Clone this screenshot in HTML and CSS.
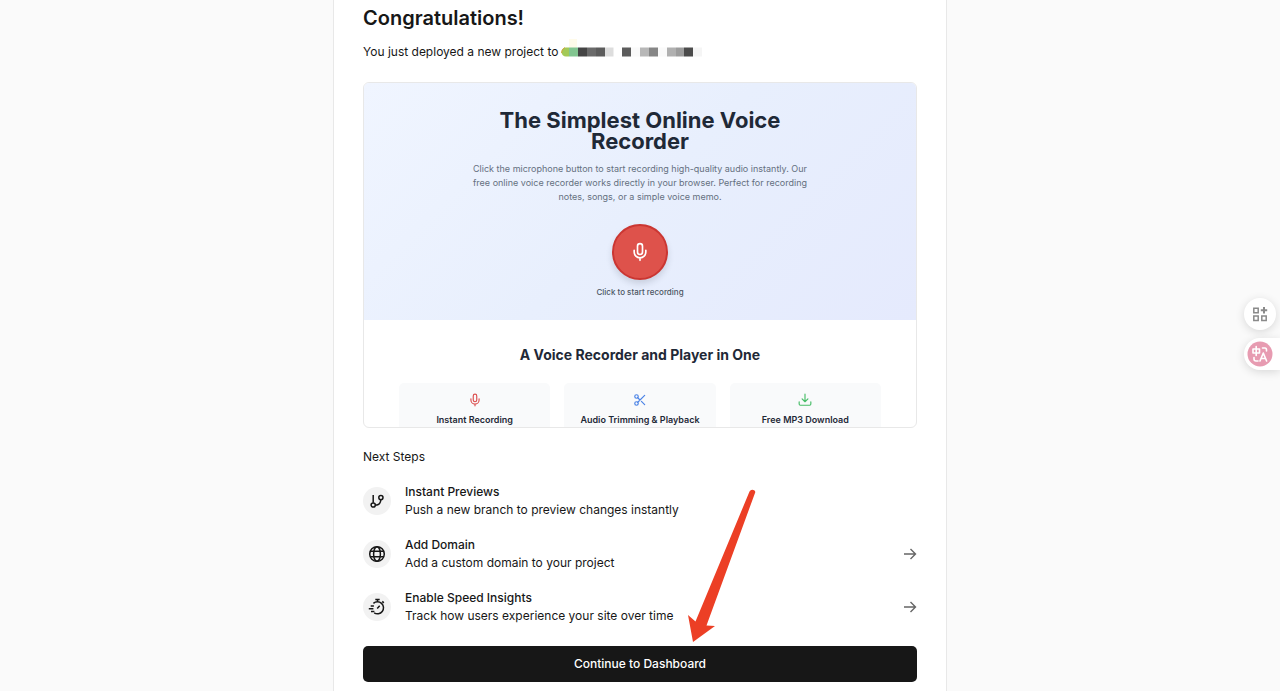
FILE: index.html
```html
<!DOCTYPE html>
<html lang="en">
<head>
<meta charset="utf-8">
<meta name="viewport" content="width=device-width, initial-scale=1">
<title>Congratulations!</title>
<link rel="stylesheet" href="styles.css">
</head>
<body>
<main class="panel">
  <h1 class="title">Congratulations!</h1>
  <p class="lead">You just deployed a new project to
    <svg class="redacted" width="141" height="18" viewBox="0 0 141 18" aria-hidden="true">
      <path fill="#fffbea" d="M8 0h8v9H8z"/>
      <path fill="#a3c957" d="M8 8.500H5a4.500 4.500 0 0 0 0 9h3z"/>
      <path fill="none" stroke="#d1a43c" d="M4 8.500Q.5 10 .5 14"/>
      <path fill="#82c590" d="M8 8.500h9v9H8z"/>
      <path fill="#444" d="M17 8.500h9v9h-9z"/>
      <path fill="#6a6a6a" d="M26 8.500h9v9h-9z"/>
      <path fill="#5c5c5c" d="M35 8.500h9v9h-9zM61 8.500h9v9h-9z"/>
      <path fill="#ddd" d="M44 8.500h8.500v9H44z"/>
      <path fill="#fafafa" d="M70 8.500h9v9h-9zM97 8.500h9v9h-9z"/>
      <path fill="#b7b7b7" d="M79 8.500h9v9h-9z"/>
      <path fill="#868686" d="M88 8.500h9v9h-9z"/>
      <path fill="#b0b0b0" d="M106 8.500h9v9h-9z"/>
      <path fill="#9c9c9c" d="M115 8.500h8v9h-8z"/>
      <path fill="#4b4b4b" d="M123 8.500h9v9h-9z"/>
      <path fill="#f5f5f5" d="M132 8.500h9v9h-9z"/>
    </svg>
  </p>

  <section class="preview">
    <div class="hero">
      <h2 class="hero-title">The Simplest Online Voice Recorder</h2>
      <p class="hero-text">Click the microphone button to start recording high-quality audio instantly. Our free online voice recorder works directly in your browser. Perfect for recording notes, songs, or a simple voice memo.</p>
      <button class="record" type="button" aria-label="Start recording">
        <svg width="20" height="20" viewBox="0 0 24 24" fill="none" stroke="#fff" stroke-width="2" stroke-linecap="round" stroke-linejoin="round"><rect x="9" y="2" width="6" height="13" rx="3"/><path d="M19 10v2a7 7 0 0 1-14 0v-2M12 19v3"/></svg>
      </button>
      <p class="record-hint">Click to start recording</p>
    </div>
    <div class="features">
      <h3 class="features-title">A Voice Recorder and Player in One</h3>
      <div class="feature-grid">
        <div class="feature">
          <svg width="14" height="14" viewBox="0 0 24 24" fill="none" stroke="#dc4f4f" stroke-width="2" stroke-linecap="round" stroke-linejoin="round"><rect x="9" y="2" width="6" height="13" rx="3"/><path d="M19 10v2a7 7 0 0 1-14 0v-2M12 19v3"/></svg>
          <h4 class="feature-name">Instant Recording</h4>
        </div>
        <div class="feature">
          <svg width="14" height="14" viewBox="0 0 24 24" fill="none" stroke="#4b83e6" stroke-width="2" stroke-linecap="round" stroke-linejoin="round"><circle cx="6" cy="6" r="3"/><circle cx="6" cy="18" r="3"/><path d="M20 4 8.120 15.880M14.470 14.480 20 20M8.120 8.120 12 12"/></svg>
          <h4 class="feature-name">Audio Trimming &amp; Playback</h4>
        </div>
        <div class="feature">
          <svg width="14" height="14" viewBox="0 0 24 24" fill="none" stroke="#48bd68" stroke-width="2" stroke-linecap="round" stroke-linejoin="round"><path d="M22 15v4a2 2 0 0 1-2 2H4a2 2 0 0 1-2-2v-4M7 10l5 5 5-5M12 15V2"/></svg>
          <h4 class="feature-name">Free MP3 Download</h4>
        </div>
      </div>
    </div>
  </section>

  <h2 class="steps-title">Next Steps</h2>
  <ul class="steps">
    <li class="step">
      <span class="step-icon"><svg width="16" height="16" viewBox="0 0 16 16" fill="none" stroke="#171717" stroke-width="1.500"><path d="M4.200 2v7.700M6.500 12.300c3.500-.3 5.200-2.300 5.300-5.500"/><circle cx="4.200" cy="12" r="2.100"/><circle cx="11.900" cy="4.600" r="2.100"/></svg></span>
      <div class="step-body"><h3 class="step-name">Instant Previews</h3><p class="step-text">Push a new branch to preview changes instantly</p></div>
    </li>
    <li>
      <a class="step" href="#domain">
        <span class="step-icon"><svg width="18" height="18" viewBox="0 0 18 18" fill="none" stroke="#171717" stroke-width="1.500"><circle cx="9" cy="9" r="7.300"/><ellipse cx="9" cy="9" rx="3.400" ry="7.300"/><path d="M2.300 6.300h13.400M2.300 11.700h13.400"/></svg></span>
        <div class="step-body"><h3 class="step-name">Add Domain</h3><p class="step-text">Add a custom domain to your project</p></div>
        <svg class="go" width="14" height="14" viewBox="0 0 14 14" fill="none" stroke="#666" stroke-width="1.400"><path d="M1 7h11.500M7.500 2l5 5-5 5"/></svg>
      </a>
    </li>
    <li>
      <a class="step" href="#insights">
        <span class="step-icon"><svg width="18" height="18" viewBox="0 0 18 18" fill="none" stroke="#171717" stroke-width="1.500"><path d="M5.400 5.400A6 6 0 1 1 6.200 14.800M7.300 1.600h4.400M9.500 1.600v2M14.300 3.400l1.500 1.500M9.200 10.400l2.500-2.700M2.700 8h3.200M.8 10.700h4.600M3 13.400h3.400"/></svg></span>
        <div class="step-body"><h3 class="step-name">Enable Speed Insights</h3><p class="step-text">Track how users experience your site over time</p></div>
        <svg class="go" width="14" height="14" viewBox="0 0 14 14" fill="none" stroke="#666" stroke-width="1.400"><path d="M1 7h11.500M7.500 2l5 5-5 5"/></svg>
      </a>
    </li>
  </ul>
  <div class="action">
    <button class="continue" type="button">Continue to Dashboard</button>
    <svg class="pointer" width="70" height="154" viewBox="0 0 70 154" aria-hidden="true"><path fill="#ec3f25" d="M63.500 3.500Q65 1 67.500 2T69 5L20.500 137.500l8.500.5L7 154 2 127l7.500 6.500z"/></svg>
  </div>
</main>

<aside class="dock">
  <button class="dock-button" type="button" aria-label="Apps">
    <svg width="16" height="16" viewBox="0 0 16 16" fill="none" stroke="#8a8a8a" stroke-width="1.500"><path d="M1.800 2.300h4.400v4.400H1.800zM1.800 10h4.400v4.400H1.800zM9.800 10h4.400v4.400H9.800z"/><path stroke-width="2" d="M12 1v6.400M8.800 4.200h6.400"/></svg>
  </button>
  <button class="dock-button dock-tab" type="button" aria-label="Translate">
    <svg width="26" height="26" viewBox="0 0 26 26" fill="none" stroke="#fff" stroke-width="1.600" stroke-linecap="round" stroke-linejoin="round"><circle cx="13" cy="13" r="12.500" fill="#e79bb1" stroke="none"/><path d="M6 8h6.500v4H6zM9.200 5.500v9M15.500 7h2.500q1.500 0 1.500 2v1M7 16.500V18q0 2 2 2h2M13 20l3.300-8 3.300 8M14.200 17.500h4.200"/></svg>
  </button>
</aside>
</body>
</html>
```
FILE: styles.css
```css
* {
  box-sizing: border-box;
}

body {
  margin: 0;
  min-height: 100vh;
  background: #fafafa;
  color: #171717;
  font-family: Inter, "Liberation Sans", sans-serif;
  font-size: 12px;
  line-height: 18px;
}

h1, h2, h3, h4, p, ul {
  margin: 0;
  padding: 0;
}

button {
  border: 0;
  padding: 0;
  font: inherit;
}

.panel {
  max-width: 614px;
  min-height: 100vh;
  margin: 0 auto;
  padding: 4px 29px 9px;
  background: #fff;
  border: solid #e8e8e8;
  border-width: 0 1px;
}

.title {
  font-size: 20px;
  line-height: 28px;
  font-weight: 600;
}

.lead {
  display: flex;
  align-items: center;
  gap: 3px;
  margin-top: 10px;
  line-height: 20px;
}

.redacted {
  align-self: flex-start;
  margin-top: -3px;
}

.preview {
  margin-top: 20px;
  aspect-ratio: 16 / 10;
  overflow: hidden;
  border: 1px solid #e8e8e8;
  border-radius: 6px;
  color: #1f2937;
}

.hero {
  display: flex;
  flex-direction: column;
  align-items: center;
  padding: 27px 24px 21px;
  background: linear-gradient(135deg, #f0f5ff, #e8effd 50%, #e5eafd);
  text-align: center;
}

.hero-title {
  max-width: 320px;
  font-size: 22px;
  line-height: 21px;
  font-weight: 700;
}

.hero-text {
  max-width: 345px;
  margin-top: 10px;
  color: #657080;
  font-size: 9px;
  line-height: 14px;
}

.record {
  display: grid;
  place-items: center;
  width: 56px;
  height: 56px;
  margin-top: 20px;
  border: 2px solid #cb3632;
  border-radius: 50%;
  background: #de524b;
  box-shadow: 0 4px 6px #1f293726;
}

.record-hint {
  margin-top: 5px;
  color: #4b5563;
  font-size: 8px;
  line-height: 14px;
  font-weight: 500;
}

.features {
  padding: 26px 35px 0;
  text-align: center;
}

.features-title {
  font-size: 14px;
  line-height: 18px;
  font-weight: 700;
}

.feature-grid {
  display: grid;
  grid-template-columns: repeat(3, 1fr);
  gap: 14px;
  margin-top: 19px;
}

.feature {
  display: flex;
  flex-direction: column;
  align-items: center;
  gap: 6px;
  height: 70px;
  padding-top: 10px;
  border-radius: 5px;
  background: #f9fafb;
}

.feature-name {
  font-size: 9px;
  line-height: 14px;
  font-weight: 600;
}

.steps-title {
  margin-top: 20px;
  font-size: 12px;
  font-weight: 400;
}

.steps {
  display: flex;
  flex-direction: column;
  gap: 17px;
  margin-top: 17px;
  list-style: none;
}

.step {
  display: flex;
  align-items: center;
  gap: 14px;
  color: inherit;
  text-decoration: none;
}

.step-icon {
  display: grid;
  place-items: center;
  width: 28px;
  height: 28px;
  border-radius: 50%;
  background: #f2f2f2;
}

.step-body {
  flex: 1;
}

.step-name {
  font-size: 12px;
  font-weight: 500;
}

.action {
  position: relative;
  margin-top: 21px;
}

.continue {
  width: 100%;
  height: 36px;
  border-radius: 5px;
  background: #171717;
  color: #fff;
  font-weight: 500;
}

.pointer {
  position: absolute;
  left: 323px;
  bottom: 40px;
  pointer-events: none;
}

.dock {
  position: fixed;
  top: 298px;
  right: 0;
  display: flex;
  flex-direction: column;
  align-items: flex-end;
  gap: 8px;
}

.dock-button {
  display: grid;
  place-items: center;
  width: 32px;
  height: 32px;
  margin-right: 4px;
  border-radius: 16px;
  background: #fff;
  box-shadow: 0 2px 10px #00000024;
}

.dock-tab {
  justify-content: start;
  width: 36px;
  margin-right: 0;
  padding-left: 3px;
  border-radius: 16px 0 0 16px;
}
```
